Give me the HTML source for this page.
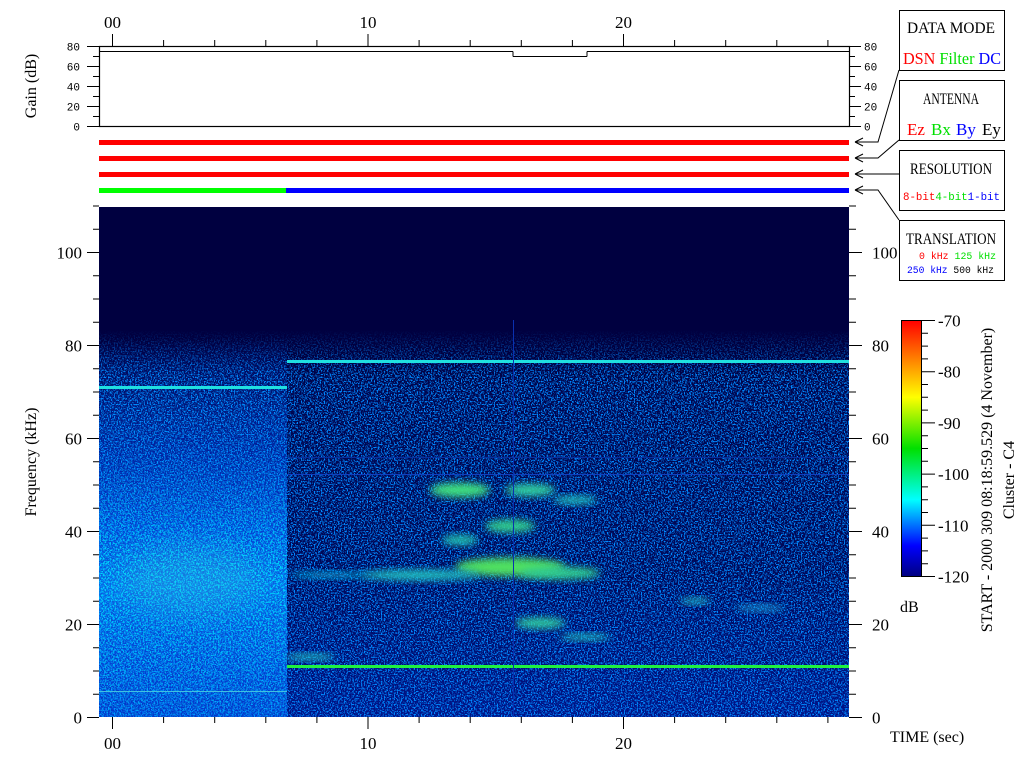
<!DOCTYPE html>
<html><head><meta charset="utf-8"><style>
html,body{margin:0;padding:0;background:#fff;width:1024px;height:768px;overflow:hidden}
svg{display:block}
text{font-family:"Liberation Serif",serif;}
.m{font-family:"Liberation Mono",monospace;}
</style></head><body>
<svg id="s" width="1024" height="768" viewBox="0 0 1024 768" xmlns="http://www.w3.org/2000/svg">
<defs>
<filter id="nz" x="0" y="0" width="100%" height="100%">
<feTurbulence type="fractalNoise" baseFrequency="0.7" numOctaves="2" seed="3" result="t"/>
<feColorMatrix in="t" type="matrix" values="0 0 0 0 0  0 0 0 0 0.25  0 0 0 0 1  9 0 0 0 -4.6"/>
</filter>
<filter id="nz2" x="0" y="0" width="100%" height="100%">
<feTurbulence type="fractalNoise" baseFrequency="0.6" numOctaves="2" seed="8" result="t"/>
<feColorMatrix in="t" type="matrix" values="0 0 0 0 0  0 0 0 0 0.9  0 0 0 0 1  0 9 0 0 -4.5"/>
</filter>
<filter id="bl" x="-50%" y="-50%" width="200%" height="200%"><feGaussianBlur stdDeviation="4"/></filter>
<filter id="bl2" x="-50%" y="-50%" width="200%" height="200%"><feGaussianBlur stdDeviation="14"/></filter>
<linearGradient id="lg" x1="0" y1="0" x2="0" y2="1">
<stop offset="0" stop-color="#000040"/><stop offset="0.08" stop-color="#000a60"/><stop offset="0.3" stop-color="#0020a0"/><stop offset="0.5" stop-color="#0540d0"/><stop offset="0.65" stop-color="#0a60e0"/><stop offset="0.85" stop-color="#0540d0"/><stop offset="1" stop-color="#0435c8"/></linearGradient>
<linearGradient id="rg" x1="0" y1="0" x2="0" y2="1">
<stop offset="0" stop-color="#000040"/><stop offset="0.1" stop-color="#000650"/><stop offset="0.6" stop-color="#000858"/><stop offset="1" stop-color="#001488"/></linearGradient>
<linearGradient id="cb" x1="0" y1="1" x2="0" y2="0">
<stop offset="0" stop-color="#000080"/><stop offset="0.12" stop-color="#0000ff"/><stop offset="0.3" stop-color="#00ffff"/><stop offset="0.5" stop-color="#00e000"/><stop offset="0.7" stop-color="#ffff00"/><stop offset="0.85" stop-color="#ff8000"/><stop offset="1" stop-color="#ff0000"/></linearGradient>
<linearGradient id="fade" x1="0" y1="0" x2="0" y2="1"><stop offset="0" stop-color="#fff" stop-opacity="0"/><stop offset="0.12" stop-color="#fff" stop-opacity="1"/></linearGradient>
<mask id="mk"><rect x="99" y="330" width="750" height="387" fill="url(#fade)"/></mask>
<linearGradient id="lfade" x1="0" y1="0" x2="0" y2="1"><stop offset="0" stop-color="#fff" stop-opacity="0"/><stop offset="0.35" stop-color="#fff" stop-opacity="0.3"/><stop offset="0.6" stop-color="#fff" stop-opacity="1"/><stop offset="0.85" stop-color="#fff" stop-opacity="0.7"/><stop offset="1" stop-color="#fff" stop-opacity="0.4"/></linearGradient>
<mask id="mk2"><rect x="99" y="340" width="188" height="377" fill="url(#lfade)"/></mask>
</defs>
<!-- spectrogram -->
<rect x="99" y="207" width="750" height="510" fill="#000040"/>
<rect x="99" y="340" width="188" height="377" fill="url(#lg)"/>
<rect x="287" y="355" width="562" height="362" fill="url(#rg)"/>
<g mask="url(#mk)"><rect x="99" y="330" width="750" height="387" filter="url(#nz)"/></g>
<g mask="url(#mk2)"><rect x="99" y="340" width="188" height="377" filter="url(#nz2)" opacity="0.8"/></g>
<ellipse cx="190" cy="580" rx="70" ry="35" fill="#30c0e0" opacity="0.3" filter="url(#bl2)"/>
<ellipse cx="460" cy="490" rx="30" ry="7" fill="#40e080" filter="url(#bl)"/>
<ellipse cx="530" cy="490" rx="25" ry="6" fill="#30d0a0" filter="url(#bl)"/>
<ellipse cx="575" cy="500" rx="22" ry="4" fill="#20c0c0" filter="url(#bl)"/>
<ellipse cx="510" cy="526" rx="25" ry="6" fill="#30d090" filter="url(#bl)"/>
<ellipse cx="460" cy="540" rx="18" ry="5" fill="#20c0b0" filter="url(#bl)"/>
<ellipse cx="510" cy="567" rx="55" ry="9" fill="#50e060" filter="url(#bl)"/>
<ellipse cx="420" cy="575" rx="60" ry="5" fill="#20c0c0" filter="url(#bl)"/>
<ellipse cx="560" cy="573" rx="40" ry="6" fill="#30d090" filter="url(#bl)"/>
<ellipse cx="330" cy="575" rx="40" ry="3" fill="#10a0d0" filter="url(#bl)"/>
<ellipse cx="540" cy="623" rx="25" ry="5" fill="#30d0a0" filter="url(#bl)"/>
<ellipse cx="585" cy="637" rx="25" ry="3" fill="#20c0c0" filter="url(#bl)"/>
<ellipse cx="695" cy="601" rx="15" ry="3" fill="#20b0c0" filter="url(#bl)"/>
<ellipse cx="310" cy="657" rx="25" ry="3" fill="#20c0c0" filter="url(#bl)"/>
<ellipse cx="760" cy="608" rx="25" ry="3" fill="#1890d0" filter="url(#bl)"/>
<rect x="99" y="386" width="188" height="3" fill="#20e0e0"/>
<rect x="287" y="360" width="562" height="3" fill="#20e0e0"/>
<rect x="287" y="665" width="562" height="3" fill="#20f040"/>
<rect x="99" y="691" width="188" height="1" fill="#40c0e0"/>
<rect x="287" y="474" width="562" height="1" fill="#1040c0"/>
<rect x="287" y="457" width="562" height="1" fill="#0830a0"/>
<rect x="513" y="320" width="1" height="397" fill="#0a30b0"/>
<!-- status bars -->
<rect x="99" y="140" width="750" height="5" fill="#ff0000"/>
<rect x="99" y="156" width="750" height="5" fill="#ff0000"/>
<rect x="99" y="172" width="750" height="5" fill="#ff0000"/>
<rect x="99" y="188" width="187" height="5" fill="#00ff00"/>
<rect x="286" y="188" width="563" height="5" fill="#0000ff"/>
<!-- gain box -->
<rect x="99.5" y="46.5" width="750" height="80" fill="none" stroke="#000" stroke-width="1.2"/>
<path d="M99 51.5H513M513 56.5H587M587 51.5H849M513 51.5V56.5M587 51.5V56.5" stroke="#000" fill="none"/>
<g id="ticks" stroke="#000" fill="none"></g>
<g id="labs" font-size="14" fill="#000"></g>
<text x="36" y="86" font-size="16" transform="rotate(-90 36 86)" text-anchor="middle">Gain (dB)</text>
<text x="36" y="462" font-size="16" transform="rotate(-90 36 462)" text-anchor="middle">Frequency (kHz)</text>
<!-- colorbar -->
<rect x="901.5" y="320.5" width="20" height="256" fill="url(#cb)" stroke="#000"/>
<text x="900" y="612" font-size="16">dB</text>
<text x="992" y="480" font-size="16" transform="rotate(-90 992 480)" text-anchor="middle">START - 2000 309 08:18:59.529 (4 November)</text>
<text x="1014" y="480" font-size="16" transform="rotate(-90 1014 480)" text-anchor="middle">Cluster - C4</text>
<text x="890" y="742" font-size="16">TIME (sec)</text>
<!-- legend boxes -->
<g stroke="#000" fill="#fff" stroke-width="1">
<rect x="899.5" y="10.5" width="105" height="60"/>
<rect x="899.5" y="80.5" width="105" height="60"/>
<rect x="899.5" y="150.5" width="105" height="60"/>
<rect x="899.5" y="220.5" width="105" height="60"/>
</g>
<path d="M899 70L878 142H855M899 140L878 158H855M899 174H855M899 220L878 190H855M855 142l8-4M855 142l8 4M855 158l8-4M855 158l8 4M855 174l8-4M855 174l8 4M855 190l8-4M855 190l8 4" stroke="#000" fill="none"/>
<g font-size="16" text-anchor="middle">
<text x="951" y="33" textLength="88" lengthAdjust="spacingAndGlyphs">DATA MODE</text>
<text x="951" y="104" textLength="56" lengthAdjust="spacingAndGlyphs">ANTENNA</text>
<text x="951" y="174" textLength="82" lengthAdjust="spacingAndGlyphs">RESOLUTION</text>
<text x="951" y="244" textLength="90" lengthAdjust="spacingAndGlyphs">TRANSLATION</text>
</g>
<text x="903" y="64" font-size="17" textLength="98" lengthAdjust="spacingAndGlyphs"><tspan fill="#ff0000">DSN</tspan> <tspan fill="#00e000">Filter</tspan> <tspan fill="#0000ff">DC</tspan></text>
<text y="135" font-size="17"><tspan fill="#ff0000" x="907">Ez</tspan><tspan fill="#00e000" x="931">Bx</tspan><tspan fill="#0000ff" x="956">By</tspan><tspan fill="#000" x="982">Ey</tspan></text>
<text x="903" y="200" font-size="11" class="m" textLength="97" lengthAdjust="spacingAndGlyphs"><tspan fill="#ff0000">8-bit</tspan><tspan fill="#00e000">4-bit</tspan><tspan fill="#0000ff">1-bit</tspan></text>
<text x="919" y="259" font-size="10" class="m" textLength="77" lengthAdjust="spacingAndGlyphs"><tspan fill="#ff0000">0 kHz</tspan> <tspan fill="#00e000">125 kHz</tspan></text>
<text x="907" y="273" font-size="10" class="m" textLength="87" lengthAdjust="spacingAndGlyphs"><tspan fill="#0000ff">250 kHz</tspan> <tspan fill="#000">500 kHz</tspan></text>
</svg>
<script>
var T=document.getElementById('ticks'),L=document.getElementById('labs'),d='';
function lab(x,y,t,a,sz,m){var e=document.createElementNS('http://www.w3.org/2000/svg','text');e.setAttribute('x',x);e.setAttribute('y',y);e.setAttribute('text-anchor',a||'middle');if(sz)e.setAttribute('font-size',sz);if(m)e.setAttribute('class','m');e.textContent=t;L.appendChild(e);}
var x0=112.5,px=25.55;
for(var s=0;s<=28;s+=2){var x=x0+s*px;var big=s%10==0;d+='M'+x+' 46V'+(big?34:40);d+='M'+x+' 717V'+(big?729:723);}
['00','10','20'].forEach(function(t,i){var x=x0+i*10*px;lab(x,28,t,'middle',17);lab(x,749,t,'middle',17);});
for(var g=0;g<=80;g+=10){var y=126.5-g;var big=g%20==0;d+='M99 '+y+'H'+(big?87:93)+'M849 '+y+'H'+(big?861:855);if(big){lab(80,y+4,g,'end',11,1);lab(864,y+4,g,'start',11,1);}}
for(var f=0;f<=110;f+=5){var y=717.5-f*4.65;var big=f%20==0;d+='M99 '+y+'H'+(big?87:93)+'M849 '+y+'H'+(big?862:856);if(big){lab(82,y+6,f,'end',17);lab(872,y+6,f,'start',17);}}
for(var v=-120;v<=-70;v+=2.5){var y=576.5-(v+120)*5.12;var big=(v%10==0);d+='M922 '+y+'H'+(big?935:928);if(big)lab(938,y+6,v,'start',17);}
var p=document.createElementNS('http://www.w3.org/2000/svg','path');p.setAttribute('d',d);T.appendChild(p);
</script>
</body></html>
